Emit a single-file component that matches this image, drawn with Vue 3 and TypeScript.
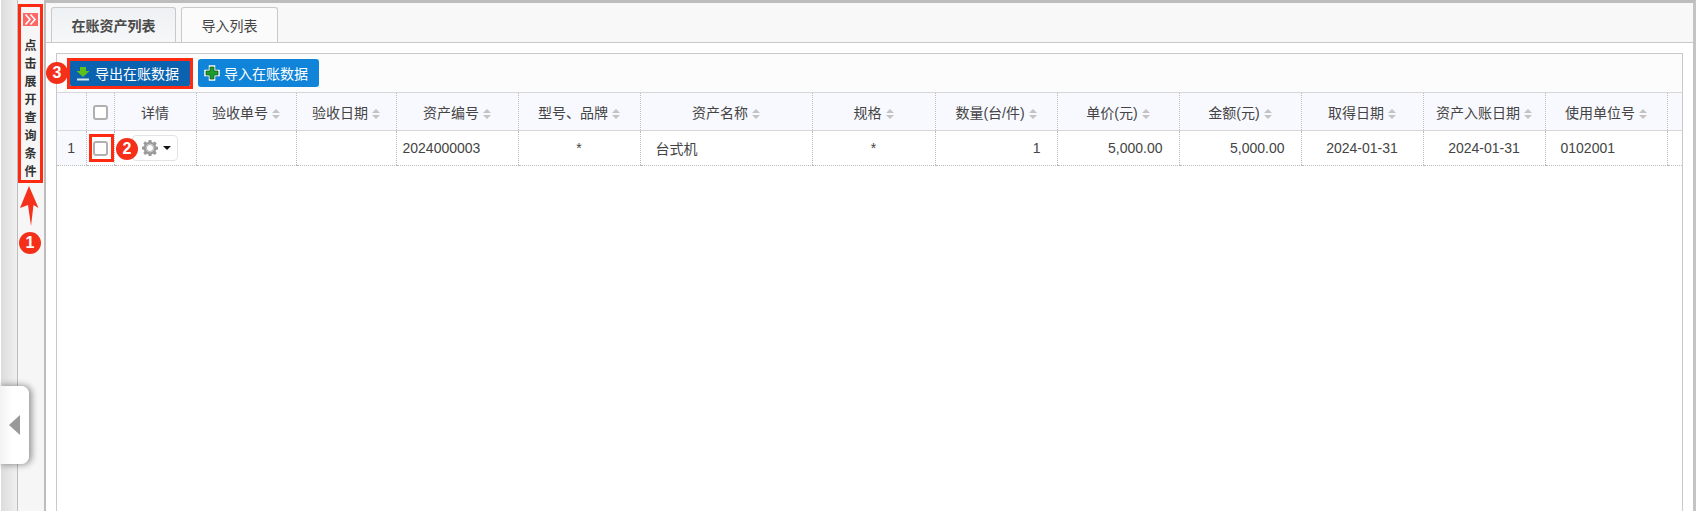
<script setup lang="ts">
interface Col { label: string; width: number; sort: boolean }
const cols: Col[] = [
  { label: '', width: 29, sort: false },
  { label: '', width: 28, sort: false },
  { label: '详情', width: 82, sort: false },
  { label: '验收单号', width: 100, sort: true },
  { label: '验收日期', width: 100, sort: true },
  { label: '资产编号', width: 122, sort: true },
  { label: '型号、品牌', width: 122, sort: true },
  { label: '资产名称', width: 172, sort: true },
  { label: '规格', width: 123, sort: true },
  { label: '数量(台/件)', width: 122, sort: true },
  { label: '单价(元)', width: 122, sort: true },
  { label: '金额(元)', width: 122, sort: true },
  { label: '取得日期', width: 122, sort: true },
  { label: '资产入账日期', width: 122, sort: true },
  { label: '使用单位号', width: 122, sort: true },
  { label: '', width: 15, sort: false },
]
const sideText = '点击展开查询条件'.split('')
</script>

<template>
  <div class="page">
    <aside class="rail">
      <div class="side">
        <div class="expand">
          <svg width="13" height="13" viewBox="0 0 13 13"><path d="M1.500 1.500l4.500 5-4.500 5M6.500 1.500l4.500 5-4.500 5" fill="none" stroke="#fff" stroke-width="1.600"/></svg>
        </div>
        <span v-for="c in sideText" :key="c" class="side-char">{{ c }}</span>
      </div>
      <svg class="up-arrow" width="20" height="41" viewBox="0 0 20 41"><path d="M9 0L18.500 22L13.500 19L11 40L8 19L0 22Z" fill="#f5311c"/></svg>
      <span class="badge b1">1</span>
      <div class="handle"><i class="tri"></i></div>
    </aside>
    <main class="main">
      <nav class="tabs">
        <div class="tab active">在账资产列表</div>
        <div class="tab">导入列表</div>
      </nav>
      <section class="body">
        <div class="panel">
          <div class="toolbar">
            <button class="btn dark">
              <svg width="14" height="15" viewBox="0 0 14 15"><path d="M4 1h6v4h3.500L7 11 .5 5H4z" fill="#5cc01c"/><path d="M1 13.500h12" stroke="#d9e4ea" stroke-width="2"/></svg>
              导出在账数据
            </button>
            <button class="btn blue">
              <svg width="16" height="16" viewBox="0 0 16 16"><path d="M5.500 1h5v4.500H15v5h-4.500V15h-5v-4.500H1v-5h4.500z" fill="#fff" stroke="#fff" stroke-width="1.500"/><path d="M6 2h4v4h4v4h-4v4H6v-4H2V6h4z" fill="#1c9c2c" stroke="#0c5f1c" stroke-width=".8"/></svg>
              导入在账数据
            </button>
          </div>
          <table class="grid">
            <colgroup><col v-for="(c, i) in cols" :key="i" :style="{ width: c.width + 'px' }" /></colgroup>
            <thead>
              <tr>
                <th v-for="(c, i) in cols" :key="i">
                  <span v-if="i === 1" class="check"></span>
                  <template v-else>
                    {{ c.label }}<span v-if="c.sort" class="sort"><i class="up"></i><i class="down"></i></span>
                  </template>
                </th>
              </tr>
            </thead>
            <tbody>
              <tr>
                <td class="idx">1</td>
                <td class="center"><span class="check"></span></td>
                <td>
                  <span class="gear-btn">
                    <svg width="16" height="16" viewBox="0 0 16 16"><path fill-rule="evenodd" d="M6.700 0h2.600l.4 2.100 1.300.6 1.800-1.200 1.900 1.900-1.200 1.800.6 1.300 2.100.4v2.600l-2.100.4-.6 1.300 1.200 1.800-1.900 1.900-1.800-1.200-1.300.6-.4 2.100H6.700l-.4-2.100-1.300-.6-1.800 1.200-1.900-1.900 1.200-1.800-.6-1.300L0 9.300V6.700l1.900-.4.600-1.300-1.200-1.800 1.900-1.900L5 2.700l1.300-.6zM8 5a3 3 0 100 6 3 3 0 000-6z" fill="#999"/><circle cx="8" cy="8" r="4" fill="none" stroke="#c9c9c9" stroke-width="1"/></svg>
                    <i class="caret"></i>
                  </span>
                </td>
                <td></td>
                <td></td>
                <td class="left">2024000003</td>
                <td class="center">*</td>
                <td class="name">台式机</td>
                <td class="center">*</td>
                <td class="right">1</td>
                <td class="right">5,000.00</td>
                <td class="right">5,000.00</td>
                <td class="center">2024-01-31</td>
                <td class="center">2024-01-31</td>
                <td class="name">0102001</td>
                <td></td>
              </tr>
            </tbody>
          </table>
          <span class="mark m-btn"></span>
          <span class="mark m-check"></span>
          <span class="badge b2">2</span>
          <span class="badge b3">3</span>
        </div>
      </section>
    </main>
  </div>
</template>

<style scoped>
.page {
  width: 1696px;
  height: 511px;
  display: flex;
  overflow: hidden;
  position: relative;
  font-family: "Liberation Sans", "Noto Sans CJK SC", sans-serif;
  font-size: 14px;
  color: #444;
  background: #fff;
}
.rail {
  width: 46px;
  flex: none;
  box-sizing: border-box;
  position: relative;
  padding: 4px 2px 0 18px;
  border-right: 2px solid #bdbdbd;
  background: linear-gradient(90deg, #fff 0, #fff 1px, #dcdcdc 1px, #f0f0f0 17px, #bdbdbd 17px, #bdbdbd 18px, #f6f6f6 18px);
}
.side {
  width: 25px;
  height: 179px;
  box-sizing: border-box;
  border: 3px solid #ff2a12;
  display: flex;
  flex-direction: column;
  align-items: center;
  padding-top: 6px;
}
.expand {
  width: 15px;
  height: 15px;
  background: #ff6767;
  display: flex;
  align-items: center;
  justify-content: center;
  margin-bottom: 11px;
}
.side-char {
  height: 18px;
  line-height: 18px;
  font-size: 12px;
  font-weight: 700;
  color: #333;
}
.up-arrow {
  position: absolute;
  left: 20px;
  top: 186px;
}
.badge {
  position: absolute;
  width: 22px;
  height: 22px;
  border-radius: 50%;
  background: #f5301a;
  color: #fff;
  font-size: 16px;
  font-weight: 700;
  line-height: 22px;
  text-align: center;
}
.b1 { left: 19px; top: 232px; }
.handle {
  position: absolute;
  left: 0;
  top: 386px;
  width: 29px;
  height: 78px;
  background: linear-gradient(90deg, #f2f2f2, #fff 12px);
  border-radius: 0 8px 8px 0;
  clip-path: polygon(0 -10px, 60px -10px, 60px 100px, 0 100px);
  box-shadow: 2px 0 6px 1px rgba(0, 0, 0, .38);
  display: flex;
  align-items: center;
  padding-left: 9px;
  box-sizing: border-box;
}
.tri {
  width: 0;
  height: 0;
  border-top: 10px solid transparent;
  border-bottom: 10px solid transparent;
  border-right: 11px solid #999;
}
.main {
  flex: 1;
  min-width: 0;
  display: flex;
  flex-direction: column;
  border-top: 3px solid #bdbdbd;
  border-right: 3px solid #c4c4c4;
}
.tabs {
  height: 40px;
  flex: none;
  box-sizing: border-box;
  display: flex;
  gap: 5px;
  padding: 4px 0 0 5px;
  background: #f8f8f8;
  border-bottom: 1px solid #c9c9c9;
}
.tab {
  width: 97px;
  height: 35px;
  box-sizing: border-box;
  border: 1px solid #c9c9c9;
  border-bottom: 0;
  border-radius: 3px 3px 0 0;
  background: #fbfbfb;
  text-align: center;
  line-height: 36px;
  font-size: 14px;
}
.tab.active {
  width: 125px;
  background: linear-gradient(180deg, #eef1f3, #f6f7f8);
  font-weight: 700;
  color: #4a4a4a;
}
.body {
  flex: 1;
  min-height: 0;
  padding: 10px 10px 0 10px;
}
.panel {
  position: relative;
  height: 100%;
  box-sizing: border-box;
  border: 1px solid #c9c9c9;
  border-bottom: 0;
}
.toolbar {
  height: 38px;
  box-sizing: border-box;
  display: flex;
  gap: 8px;
  padding: 5px 0 0 13px;
  background: #fcfcfc;
}
.btn {
  height: 28px;
  border: 0;
  border-radius: 3px;
  padding: 0 0 0 6px;
  width: 120px;
  display: flex;
  align-items: center;
  gap: 5px;
  font: inherit;
  color: #fff;
}
.btn.dark { background: #0b62ae; }
.btn.blue { background: #0f84d8; width: 121px; gap: 4px; }
.grid {
  width: 1625px;
  table-layout: fixed;
  border-collapse: collapse;
}
th, td {
  padding: 0;
  text-align: center;
  border-left: 1px dotted #bbb;
  overflow: hidden;
  white-space: nowrap;
}
th:first-child, td:first-child { border-left: 0; }
th {
  height: 37px;
  background: #f8f9fe;
  font-weight: 400;
  border-top: 1px solid #d8d8d8;
  border-bottom: 1px solid #d8d8d8;
}
td {
  height: 34px;
  border-bottom: 1px dotted #bbb;
  color: #444;
}
td.idx { background: #f8f9fe; }
td.left { text-align: left; padding-left: 6px; }
td.name { text-align: left; padding-left: 15px; }
td.right { text-align: right; padding-right: 16px; }
.sort {
  display: inline-flex;
  flex-direction: column;
  gap: 2px;
  margin-left: 4px;
  vertical-align: middle;
}
.sort i {
  width: 0;
  height: 0;
  border-left: 4px solid transparent;
  border-right: 4px solid transparent;
}
.sort .up { border-bottom: 4px solid #c3c3c3; }
.sort .down { border-top: 4px solid #c3c3c3; }
.check {
  display: inline-block;
  width: 15px;
  height: 15px;
  box-sizing: border-box;
  border: 2px solid #b0b0b0;
  border-radius: 3px;
  background: #fff;
  vertical-align: middle;
}
.gear-btn {
  width: 46px;
  height: 26px;
  margin-left: 17px;
  box-sizing: border-box;
  border: 1px solid #e3e3e3;
  border-radius: 4px;
  background: #fff;
  display: flex;
  align-items: center;
  gap: 5px;
  padding-left: 9px;
}
.caret {
  width: 0;
  height: 0;
  border-left: 4px solid transparent;
  border-right: 4px solid transparent;
  border-top: 4px solid #111;
}
.mark {
  position: absolute;
  border: 3px solid #ff2a12;
  box-sizing: border-box;
}
.m-btn { left: 10px; top: 4px; width: 126px; height: 31px; }
.m-check { left: 32px; top: 80px; width: 25px; height: 28px; }
.b2 { left: 59px; top: 84px; }
.b3 { left: -11px; top: 8px; }
</style>
